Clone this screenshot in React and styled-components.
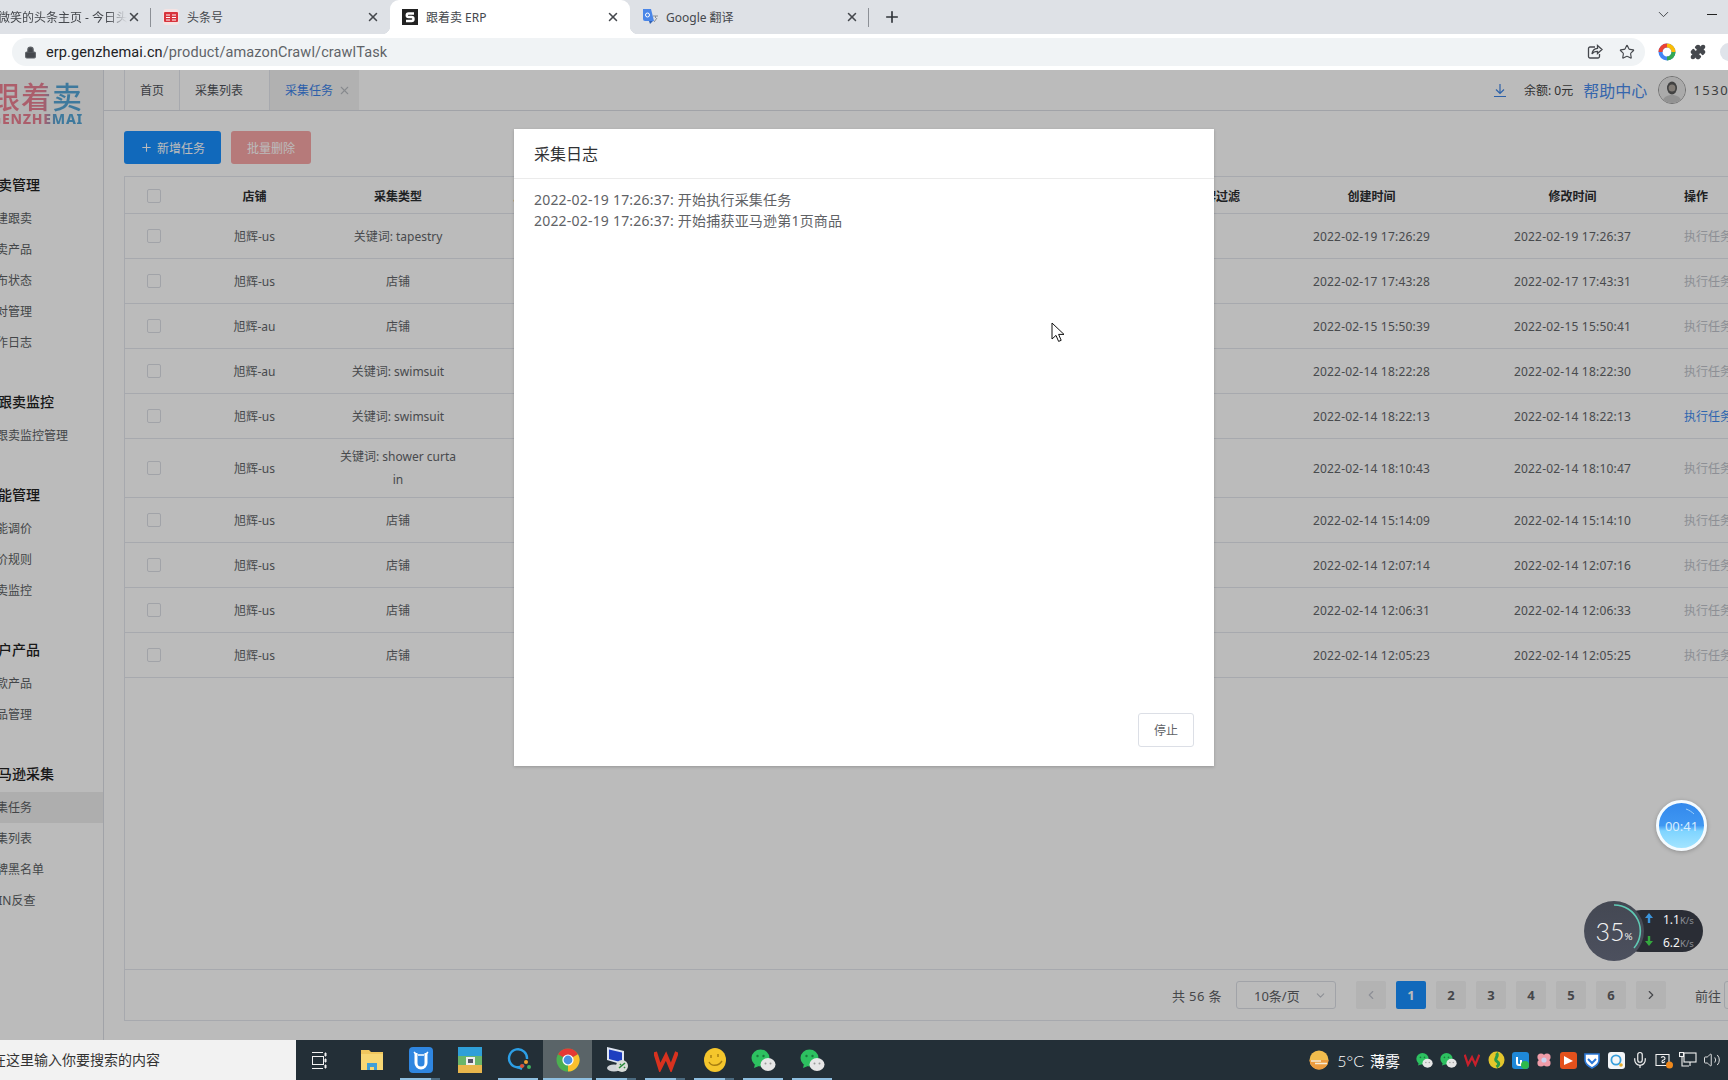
import React from 'react';
import styled, { createGlobalStyle } from 'styled-components';
import { X, Plus, ChevronDown, ChevronLeft, ChevronRight, Lock, Star, Puzzle, Mic, Volume2 } from 'lucide-react';

const SANS = `"Noto Sans", "Noto Sans CJK SC", sans-serif`;

const GlobalStyle = createGlobalStyle`
  html, body {
    margin: 0;
    padding: 0;
    width: 1728px;
    height: 1080px;
    overflow: hidden;
    font-family: ${SANS};
  }
  * { box-sizing: border-box; }
`;

const Screen = styled.div`
  position: relative;
  display: flex;
  flex-direction: column;
  width: 1728px;
  height: 1080px;
  overflow: hidden;
  background: #fff;
`;

/* browser chrome */
const TabStrip = styled.div`
  display: flex;
  align-items: stretch;
  height: 34px;
  flex: none;
  background: #dee1e6;
`;

const BrowserTab = styled.div`
  position: relative;
  display: flex;
  align-items: center;
  flex: none;
  width: ${(p) => p.$width}px;
  margin-left: ${(p) => p.$shift || 0}px;
  padding: ${(p) => (p.$noIcon ? '0 10px 0 0' : '0 10px 0 12px')};
  font-size: 12px;
  color: #45484d;
  background: ${(p) => (p.$active ? '#fff' : 'transparent')};
  border-radius: ${(p) => (p.$active ? '9px 9px 0 0' : '0')};
  ${(p) =>
    p.$divider &&
    `&::after {
      content: "";
      position: absolute;
      right: 0;
      top: 8px;
      height: 19px;
      width: 1px;
      background: #8c9096;
    }`}
  ${(p) =>
    p.$active &&
    `&::before, &::after {
      content: "";
      position: absolute;
      bottom: 0;
      width: 8px;
      height: 8px;
    }
    &::before {
      left: -8px;
      background: radial-gradient(circle at 0 0, transparent 8px, #fff 8.5px);
    }
    &::after {
      right: -8px;
      background: radial-gradient(circle at 100% 0, transparent 8px, #fff 8.5px);
    }`}
`;

const TabIcon = styled.span`
  display: inline-flex;
  flex: none;
  width: 16px;
  height: 16px;
  margin-right: 8px;
`;

const TabTitle = styled.span`
  flex: 1;
  min-width: 0;
  white-space: nowrap;
  overflow: hidden;
  ${(p) =>
    p.$fade &&
    `-webkit-mask-image: linear-gradient(90deg, #000 85%, transparent 100%);
     mask-image: linear-gradient(90deg, #000 85%, transparent 100%);`}
`;

const NewTab = styled.span`
  display: inline-flex;
  align-items: center;
  margin-left: 14px;
  color: #30343a;
`;

const WindowControls = styled.div`
  display: flex;
  align-items: center;
  margin-left: auto;
  gap: 35px;
  padding-right: 11px;
  color: #3a3d42;
  height: 28px;
`;

const MinimizeBar = styled.span`
  display: block;
  width: 10px;
  height: 1px;
  background: #222;
`;

const Toolbar = styled.div`
  display: flex;
  align-items: flex-start;
  height: 36px;
  flex: none;
  padding: 4px 0 0 12px;
  background: #fff;
`;

const Omnibox = styled.div`
  display: flex;
  align-items: center;
  flex: none;
  width: 1633px;
  height: 28px;
  padding: 0 10px 0 12px;
  border-radius: 14px;
  background: #f0f3f5;
  font-family: Roboto, ${SANS};
  font-size: 14.5px;
  color: #5f6368;
`;

const Url = styled.span`
  margin-left: 9px;
  letter-spacing: 0.12px;
  & b {
    font-weight: 400;
    color: #202124;
  }
`;

const OmniActions = styled.div`
  display: flex;
  align-items: center;
  gap: 16px;
  margin-left: auto;
  color: #45484d;
`;

const ExtIcons = styled.div`
  display: flex;
  align-items: center;
  flex: none;
  gap: 14px;
  height: 28px;
  margin-left: 13px;
  color: #45484d;
`;

const ProfileDot = styled.span`
  display: block;
  flex: none;
  width: 18px;
  height: 18px;
  border-radius: 50%;
  background: #dfe3ea;
`;

/* page */
const Page = styled.div`
  position: relative;
  display: flex;
  flex: 1;
  min-height: 0;
  overflow: hidden;
  background: #fff;
`;

const Sidebar = styled.aside`
  flex: none;
  width: 104px;
  border-right: 1px solid #dcdfe6;
  overflow: hidden;
`;

const Logo = styled.div`
  height: 70px;
  padding: 8px 0 0 0;
  background: #f6f6f6;
  white-space: nowrap;
`;

const LogoMark = styled.div`
  margin-left: -10px;
  width: 93px;
  font-size: 30px;
  font-weight: 500;
  line-height: 34px;
  letter-spacing: 1px;
  font-family: "Noto Sans CJK SC", sans-serif;
  background: linear-gradient(90deg, #f07f8f 0%, #e78195 58%, #55a6d6 70%);
  -webkit-background-clip: text;
  background-clip: text;
  color: transparent;
`;

const LogoWord = styled(LogoMark)`
  margin-left: -9px;
  width: 92px;
  font-size: 14px;
  font-weight: 800;
  line-height: 13px;
  letter-spacing: 0.75px;
  font-family: ${SANS};
`;

const Nav = styled.nav`
  padding-top: 27px;
`;

const NavGroup = styled.div`
  margin-bottom: 26px;
`;

const NavTitle = styled.div`
  height: 36px;
  line-height: 35px;
  margin-left: -16px;
  font-size: 14px;
  font-weight: 500;
  color: #222;
  white-space: nowrap;
`;

const NavItem = styled.div`
  height: 31px;
  line-height: 31px;
  font-size: 12px;
  color: #5c5f63;
  white-space: nowrap;
  background: ${(p) => (p.$active ? '#eeeeee' : 'transparent')};
  & span {
    display: block;
    margin-left: -16px;
  }
`;

const Main = styled.main`
  flex: none;
  width: 1716px;
  display: flex;
  flex-direction: column;
`;

const TabBar = styled.div`
  display: flex;
  align-items: stretch;
  flex: none;
  height: 41px;
  padding-left: 20px;
  border-bottom: 1px solid #dcdfe6;
`;

const PageTab = styled.div`
  display: flex;
  align-items: center;
  flex: none;
  width: ${(p) => p.$width}px;
  padding-left: ${(p) => p.$pad || 15}px;
  font-size: 12px;
  color: ${(p) => (p.$active ? '#3b82e8' : '#50535a')};
  background: ${(p) => (p.$active ? '#f2f2f2' : 'transparent')};
  border-left: 1px solid #e4e7ed;
  &:last-of-type {
    border-right: 1px solid #e4e7ed;
  }
`;

const TabClose = styled.span`
  display: inline-flex;
  margin-left: 5px;
  color: #b9bcc2;
`;

const TopRight = styled.div`
  display: flex;
  align-items: center;
  margin-left: 1134px;
  white-space: nowrap;
`;

const DownloadMark = styled.span`
  display: inline-flex;
  color: #3f86e6;
  margin-right: 17px;
`;

const Balance = styled.span`
  font-size: 12px;
  color: #444;
  margin-right: 10px;
`;

const HelpLink = styled.span`
  font-size: 16px;
  color: #4a8bec;
  margin-right: 11px;
`;

const Avatar = styled.span`
  display: inline-flex;
  width: 28px;
  height: 28px;
  margin-right: 7px;
  border-radius: 50%;
  border: 1px solid #9a9a9a;
  overflow: hidden;
  background: #eee;
`;

const UserName = styled.span`
  font-size: 13px;
  letter-spacing: 1.6px;
  color: #555;
`;

const Content = styled.div`
  flex: 1;
  min-height: 0;
  display: flex;
  flex-direction: column;
  padding: 20px 20px 19px;
`;

const Actions = styled.div`
  display: flex;
  gap: 10px;
  flex: none;
  margin-bottom: 12px;
`;

const ActionButton = styled.button`
  display: inline-flex;
  align-items: center;
  justify-content: center;
  width: ${(p) => p.$width}px;
  height: 33px;
  padding: 0;
  border: none;
  border-radius: 3px;
  font-family: inherit;
  font-size: 12px;
  color: #fff;
  background: ${(p) => p.$bg};
  & svg {
    margin-right: 4px;
  }
`;

const Panel = styled.section`
  flex: 1;
  min-height: 0;
  width: 1676px;
  display: flex;
  flex-direction: column;
  border: 1px solid #e4e7ed;
`;

const TableArea = styled.div`
  flex: 1;
  min-height: 0;
`;

const Table = styled.table`
  width: 1674px;
  table-layout: fixed;
  border-collapse: separate;
  border-spacing: 0;
  font-size: 12px;
  color: #63666a;
`;

const Th = styled.th`
  height: 37px;
  padding: 2px 0 0;
  font-weight: 600;
  color: #2b2d30;
  text-align: ${(p) => p.$align || 'center'};
  padding-left: ${(p) => p.$pad || 0}px;
  border-bottom: 1px solid #e4e7ed;
  white-space: nowrap;
`;

const Td = styled.td`
  height: 45px;
  padding: 6px 12px;
  line-height: 23px;
  text-align: center;
  border-bottom: 1px solid #e4e7ed;
  word-break: break-all;
`;

const TimeCell = styled(Td)`
  padding: 6px 0;
  letter-spacing: 0.2px;
`;

const OpCell = styled(Td)`
  text-align: left;
  padding-left: 11px;
  white-space: nowrap;
  word-break: normal;
  color: ${(p) => (p.$enabled ? '#3f8cf0' : '#c0c4cc')};
`;

const CheckBox = styled.span`
  display: inline-block;
  vertical-align: middle;
  width: 14px;
  height: 14px;
  margin-bottom: 2px;
  border: 1px solid #dcdfe6;
  border-radius: 2px;
  background: #fff;
`;

const Pagination = styled.div`
  display: flex;
  align-items: center;
  flex: none;
  justify-content: flex-end;
  height: 51px;
  padding-right: 10px;
  border-top: 1px solid #e4e7ed;
  font-size: 13px;
  color: #606266;
  white-space: nowrap;
`;

const Total = styled.span`
  margin-right: 14px;
  letter-spacing: 0.4px;
`;

const SizeSelect = styled.div`
  display: flex;
  align-items: center;
  justify-content: space-between;
  width: 100px;
  height: 28px;
  margin-right: 15px;
  padding: 0 8px 0 17px;
  border: 1px solid #dcdfe6;
  border-radius: 3px;
  color: #606266;
  & svg {
    color: #c0c4cc;
  }
`;

const PageButton = styled.span`
  display: inline-flex;
  align-items: center;
  justify-content: center;
  width: 30px;
  height: 28px;
  margin: 0 5px;
  border-radius: 2px;
  font-weight: 700;
  color: ${(p) => (p.$active ? '#fff' : p.$disabled ? '#c0c4cc' : '#606266')};
  background: ${(p) => (p.$active ? '#1890ff' : '#f4f4f5')};
`;

const GoTo = styled.span`
  display: inline-flex;
  align-items: center;
  margin-left: 24px;
`;

const GoInput = styled.span`
  display: inline-block;
  width: 46px;
  height: 28px;
  margin: 0 6px 0 3px;
  border: 1px solid #dcdfe6;
  border-radius: 3px;
`;

/* dialog */
const Mask = styled.div`
  position: absolute;
  inset: 0;
  background: rgba(0, 0, 0, 0.265);
`;

const Dialog = styled.div`
  position: absolute;
  left: 514px;
  top: 59px;
  width: 700px;
  height: 637px;
  display: flex;
  flex-direction: column;
  background: #fff;
  box-shadow: 0 1px 3px rgba(0, 0, 0, 0.2);
`;

const DialogHeader = styled.div`
  flex: none;
  height: 50px;
  padding-left: 20px;
  line-height: 50px;
  font-size: 16px;
  color: #303133;
  border-bottom: 1px solid #ebebeb;
`;

const DialogBody = styled.div`
  flex: 1;
  padding: 10px 20px;
  font-size: 14px;
  line-height: 21px;
  letter-spacing: 0.2px;
  color: #606266;
`;

const DialogFooter = styled.div`
  display: flex;
  justify-content: flex-end;
  flex: none;
  padding: 0 20px 19px;
`;

const StopButton = styled.button`
  width: 56px;
  height: 34px;
  padding: 0;
  border: 1px solid #dcdfe6;
  border-radius: 3px;
  background: #fff;
  font-family: inherit;
  font-size: 12px;
  color: #606266;
`;

/* floating desktop widgets */
const TimerBubble = styled.div`
  position: absolute;
  left: 1656px;
  top: 800px;
  width: 51px;
  height: 51px;
  display: flex;
  align-items: center;
  justify-content: center;
  border-radius: 50%;
  border: 3px solid #f4fbff;
  background: linear-gradient(180deg, #3389ec 0%, #3f97f2 50%, #7fd4ff 62%, #a2e4ff 100%);
  box-shadow: 0 1px 4px rgba(0, 0, 0, 0.25);
  color: #d8eeff;
  font-size: 13px;
  & svg {
    position: absolute;
    inset: 0;
  }
`;

const SpeedPill = styled.div`
  position: absolute;
  left: 1620px;
  top: 910px;
  width: 83px;
  height: 42px;
  display: flex;
  flex-direction: column;
  justify-content: center;
  gap: 5px;
  padding-left: 43px;
  border-radius: 21px;
  background: #2a2d35;
  color: #f4f4f4;
  font-size: 12px;
  line-height: 17px;
`;

const SpeedRow = styled.div`
  position: relative;
  white-space: nowrap;
  & small {
    font-size: 9.5px;
    color: #8a8d95;
  }
`;

const SpeedArrow = styled.span`
  position: absolute;
  left: -18px;
  top: 2px;
  display: inline-flex;
`;

const GaugeDial = styled.div`
  position: absolute;
  left: 1584px;
  top: 901px;
  width: 60px;
  height: 60px;
  display: flex;
  align-items: center;
  justify-content: center;
  border-radius: 50%;
  background: linear-gradient(180deg, #444853, #4c505e);
  color: #f2f2f2;
  font-family: Lato, ${SANS};
  font-weight: 300;
  font-size: 25px;
  & svg {
    position: absolute;
    inset: 0;
  }
  & small {
    margin-top: 9px;
    font-size: 10px;
    font-weight: 400;
  }
`;

const Cursor = styled.svg`
  position: absolute;
  left: 1051px;
  top: 322px;
`;

/* taskbar */
const Taskbar = styled.footer`
  position: relative;
  display: flex;
  align-items: stretch;
  flex: none;
  height: 40px;
  background: #232f37;
`;

const SearchBox = styled.div`
  flex: none;
  width: 296px;
  overflow: hidden;
  line-height: 40px;
  font-size: 14px;
  color: #333;
  white-space: nowrap;
  background: #f2f2f2;
  & span {
    margin-left: -8px;
    display: block;
  }
`;

const TaskIcon = styled.div`
  position: relative;
  display: flex;
  align-items: center;
  justify-content: center;
  flex: none;
  width: 49px;
  margin-left: ${(p) => p.$gap || 0}px;
  background: ${(p) => (p.$active ? '#5a6468' : 'transparent')};
  ${(p) =>
    p.$running &&
    `&::after {
      content: "";
      position: absolute;
      left: ${p.$active ? 0 : 4}px;
      right: ${p.$active ? 0 : 5}px;
      bottom: 0;
      height: 2px;
      background: ${p.$stacked ? 'linear-gradient(90deg, #8fbfe0 78%, #4c6b80 78%)' : '#8fbfe0'};
    }`}
`;

const Tray = styled.div`
  display: flex;
  align-items: center;
  margin-left: auto;
  padding-right: 4px;
  color: #fff;
`;

const Weather = styled.span`
  display: inline-flex;
  align-items: center;
  margin-right: 12px;
  font-size: 15px;
  white-space: nowrap;
  & b {
    font-family: Lato, ${SANS};
    font-weight: 300;
    font-size: 16px;
    margin: 0 6px 0 8px;
  }
`;

const TrayItem = styled.span`
  display: inline-flex;
  align-items: center;
  justify-content: center;
  width: 24px;
  height: 24px;
`;

/* drawn icons */
const ToutiaoFavicon = () => (
  <svg width="16" height="16" viewBox="0 0 16 16">
    <rect width="16" height="16" rx="3" fill="#f5e3e3" />
    <rect x="1" y="3" width="14" height="10" rx="1" fill="#d8343c" />
    <path d="M3 6h4M3 8.5h4M3 11h4M9 6h4M9 8.5h4M9 11h4" stroke="#fff" strokeWidth="1" />
  </svg>
);

const SFavicon = () => (
  <svg width="16" height="16" viewBox="0 0 16 16">
    <rect width="16" height="16" fill="#222" />
    <path d="M12 4.5H6.5a1.6 1.6 0 0 0 0 3.5h3a1.8 1.8 0 0 1 0 4H4" fill="none" stroke="#fff" strokeWidth="2.4" />
  </svg>
);

const TranslateFavicon = () => (
  <svg width="16" height="16" viewBox="0 0 16 16">
    <path d="M1 0h8l3 12H3a2 2 0 0 1-2-2z" fill="#4a86e8" />
    <circle cx="5.5" cy="6" r="2" fill="none" stroke="#fff" strokeWidth="1" />
    <path d="M11 7h5M13.5 7v2M12 13l3-4" stroke="#8a8f96" strokeWidth="1" />
    <path d="M7 12l1 3 3-3z" fill="#2f5fb3" />
  </svg>
);

const ShareIcon = () => (
  <svg width="16" height="16" viewBox="0 0 16 16" fill="none" stroke="currentColor" strokeWidth="1.3">
    <path d="M8 3H3a1.5 1.5 0 0 0-1.5 1.5v8A1.5 1.5 0 0 0 3 14h8a1.5 1.5 0 0 0 1.5-1.5V10" />
    <path d="M10.5 1.5L15 5.5 10.5 9.5V7.3C8 7.3 6.2 8 5 10c.3-3 2.2-5.3 5.5-5.6z" />
  </svg>
);

const RingExtension = () => (
  <svg width="18" height="18" viewBox="0 0 18 18" fill="none" strokeWidth="4">
    <circle cx="9" cy="9" r="6.5" stroke="#4285f4" />
    <path d="M2.5 9A6.5 6.5 0 0 1 9 2.5" stroke="#ea4335" />
    <path d="M9 2.5A6.5 6.5 0 0 1 15.5 9" stroke="#fbbc05" />
    <path d="M15.5 9A6.5 6.5 0 0 1 9 15.5" stroke="#34a853" />
  </svg>
);

const DownloadIcon = () => (
  <svg width="14" height="16" viewBox="0 0 14 16" fill="none" stroke="currentColor" strokeWidth="1.2">
    <path d="M7 2v9M3 7.5L7 11.5 11 7.5M1 14.5h12" />
  </svg>
);

const PortraitIcon = () => (
  <svg width="26" height="26" viewBox="0 0 26 26">
    <rect width="26" height="26" fill="#e8e8e8" />
    <path d="M3 26c1-6 5-8 10-8s9 2 10 8z" fill="#c8c8c8" />
    <ellipse cx="13" cy="11" rx="5" ry="6.5" fill="#5a5a5a" />
    <ellipse cx="13" cy="11" rx="3.4" ry="3.6" fill="#b0a8a0" />
  </svg>
);

const FolderIcon = () => (
  <svg width="24" height="24" viewBox="0 0 24 24">
    <path d="M1 2h8l2 2h12v18H1z" fill="#f0c75e" />
    <rect x="1" y="6" width="22" height="16" fill="#f7d774" />
    <path d="M7 22v-7h10v7h-3v-3h-4v3z" fill="#3f9fd8" />
  </svg>
);

const UBlueIcon = () => (
  <svg width="24" height="26" viewBox="0 0 24 26">
    <rect width="24" height="26" rx="4" fill="#2f86e0" />
    <path d="M7 6v10a5 5 0 0 0 10 0V6" fill="none" stroke="#fff" strokeWidth="3" />
    <path d="M5 5l3 3M19 5l-3 3M9 8h6" stroke="#fff" strokeWidth="1.6" />
  </svg>
);

const WinrarIcon = () => (
  <svg width="24" height="26" viewBox="0 0 24 26">
    <rect y="0" width="24" height="9" fill="#2f9fd8" />
    <rect y="9" width="24" height="9" fill="#6ab56a" />
    <rect y="18" width="24" height="8" fill="#e8b64c" />
    <rect x="8" y="10" width="9" height="8" fill="#eee" />
    <rect x="10" y="12" width="5" height="4" fill="#556" />
  </svg>
);

const QBubbleIcon = () => (
  <svg width="26" height="26" viewBox="0 0 26 26" fill="none">
    <path d="M18 18a9 9 0 1 1 3-6" stroke="#2c9fe6" strokeWidth="2.4" />
    <path d="M11 20l5 2" stroke="#2c9fe6" strokeWidth="2.4" />
    <circle cx="20" cy="15" r="2" fill="#f0a030" />
    <circle cx="16" cy="19" r="2" fill="#e05030" />
    <circle cx="23" cy="20" r="2" fill="#40b060" />
  </svg>
);

const ChromeIcon = () => (
  <svg width="24" height="24" viewBox="0 0 24 24" fill="none">
    <circle cx="12" cy="12" r="8" stroke="#4caf50" strokeWidth="7" />
    <path d="M5.07 8A8 8 0 0 1 18.93 8" stroke="#e53935" strokeWidth="7" />
    <path d="M18.93 8A8 8 0 0 1 12 20" stroke="#fbc02d" strokeWidth="7" />
    <circle cx="12" cy="12" r="5.6" fill="#fff" />
    <circle cx="12" cy="12" r="4.4" fill="#4a90e2" />
  </svg>
);

const ComputerIcon = () => (
  <svg width="26" height="28" viewBox="0 0 26 28">
    <path d="M3 1l17 4v14L3 14z" fill="#dfe6f2" />
    <path d="M5 3.5l13 3v10l-13-3.5z" fill="#1e3fc0" />
    <ellipse cx="10" cy="22" rx="7" ry="3.5" fill="#cfd3d8" />
    <circle cx="18" cy="20" r="6" fill="#d8dcd8" />
    <path d="M15 22l6-5M16 18l1 1M20 21l1 1" stroke="#2a8a3a" strokeWidth="1.6" />
  </svg>
);

const WpsIcon = ({ size = 24 }) => (
  <svg width={size} height={size} viewBox="0 0 24 24" fill="none">
    <path d="M1 4l5 16 6-12 5 12 6-16" stroke="#d8321f" strokeWidth="4" />
  </svg>
);

const SmileIcon = () => (
  <svg width="24" height="26" viewBox="0 0 24 26" fill="none">
    <ellipse cx="12" cy="13" rx="11" ry="12" fill="#f5c62c" />
    <path d="M6 15c2 4 9 5 13-1" stroke="#a57c10" strokeWidth="1.4" />
    <path d="M8 8v3M15 7v3" stroke="#a57c10" strokeWidth="1.4" />
  </svg>
);

const WechatIcon = ({ size = 25 }) => (
  <svg width={size} height={size} viewBox="0 0 25 25">
    <ellipse cx="9.5" cy="10" rx="9" ry="8.5" fill="#2dc160" />
    <path d="M4 16l-1 4 5-2z" fill="#2dc160" />
    <circle cx="6.5" cy="8" r="1.2" fill="#1a7a3c" />
    <circle cx="12.5" cy="8" r="1.2" fill="#1a7a3c" />
    <ellipse cx="17" cy="16.5" rx="7.5" ry="6.5" fill="#e6e6e6" />
    <circle cx="14.5" cy="15.5" r="1" fill="#9a9a9a" />
    <circle cx="19.5" cy="15.5" r="1" fill="#9a9a9a" />
  </svg>
);

const TaskViewIcon = () => (
  <svg width="17" height="17" viewBox="0 0 17 17" fill="none" stroke="#f2f2f2" strokeWidth="1">
    <path d="M0 .5h11M0 16.5h11" />
    <rect x=".5" y="4.5" width="11" height="8" />
    <path d="M13 1h1v3h-1zM13 7h1v3h-1zM13 13h1v3h-1z" fill="#f2f2f2" />
  </svg>
);

const WeatherIcon = () => (
  <svg width="20" height="20" viewBox="0 0 20 20">
    <circle cx="10" cy="10" r="9.5" fill="#f1bd4d" />
    <path d="M.5 10a9.5 9.5 0 0 0 19 0z" fill="#ec9c3f" />
    <path d="M2 11h10M6 13.5h12" stroke="#f5ead4" strokeWidth="1.6" />
  </svg>
);

const TrayBadge = ({ bg, children, radius = 3 }) => (
  <svg width="17" height="17" viewBox="0 0 17 17">
    <rect width="17" height="17" rx={radius} fill={bg} />
    {children}
  </svg>
);

const trayIcons = [
  <WechatIcon size={17} />,
  <WechatIcon size={17} />,
  <svg width="16" height="14" viewBox="0 0 24 20" fill="none"><path d="M1 2l5 15 6-11 5 11 6-15" stroke="#c8202c" strokeWidth="3.4" /></svg>,
  <svg width="17" height="18" viewBox="0 0 17 18"><ellipse cx="8.5" cy="9" rx="8" ry="8.5" fill="#e4c62c" /><path d="M8.5 2c3 3-3 6 0 8s3 4 0 6" stroke="#2a9a4a" strokeWidth="3" fill="none" /></svg>,
  <TrayBadge bg="#1e88d8"><path d="M5 5v6a2 2 0 0 0 2 2h2V8" stroke="#fff" strokeWidth="2" fill="none" /><circle cx="13" cy="13" r="4" fill="#2fb84c" /></TrayBadge>,
  <svg width="16" height="16" viewBox="0 0 16 16"><circle cx="5" cy="5" r="3.6" fill="#ef9ca8" /><circle cx="11" cy="5" r="3.6" fill="#ef9ca8" /><circle cx="5" cy="11" r="3.6" fill="#ef9ca8" /><circle cx="11" cy="11" r="3.6" fill="#ef9ca8" /><circle cx="8" cy="8" r="2.6" fill="#c9d3ef" /></svg>,
  <TrayBadge bg="#e4511c"><path d="M4 4l9 5-9 4z" fill="#fff" /></TrayBadge>,
  <svg width="16" height="17" viewBox="0 0 16 17" fill="none"><path d="M1 2h14v6c0 4-3 6-7 8-4-2-7-4-7-8z" fill="#fff" stroke="#2a78d8" strokeWidth="1.6" /><path d="M4 7l4 4 4-4" stroke="#2a78d8" strokeWidth="2" /></svg>,
  <TrayBadge bg="#f4f6f8"><circle cx="8" cy="8" r="4.6" stroke="#3aa0dc" strokeWidth="1.8" fill="none" /><circle cx="13" cy="13" r="1.8" fill="#e8b030" /></TrayBadge>,
  <Mic size={18} color="#f2f2f2" strokeWidth={1.6} />,
  <svg width="18" height="18" viewBox="0 0 18 18" fill="none" stroke="#f2f2f2" strokeWidth="1.1"><path d="M1 3.5h13v11H1z" /><path d="M6 6.5c2-1.5 4-1 4 1s-3 1-3 3 2 1 3 0" /><circle cx="14.5" cy="14" r="3.5" fill="#f0891c" stroke="none" /></svg>,
  <svg width="18" height="16" viewBox="0 0 18 16" fill="none" stroke="#f2f2f2" strokeWidth="1.1"><rect x="5" y="1" width="12" height="9" /><rect x=".5" y=".5" width="4" height="4" fill="#232f37" /><path d="M3 5v9h7M11 10v4" /></svg>,
  <Volume2 size={18} color="#f2f2f2" strokeWidth={1.2} />,
];

const navGroups = [
  { title: '跟卖管理', items: ['创建跟卖', '跟卖产品', '发布状态', '应对管理', '操作日志'] },
  { title: '防跟卖监控', items: ['防跟卖监控管理'] },
  { title: '智能管理', items: ['智能调价', '调价规则', '跟卖监控'] },
  { title: '客户产品', items: ['爆款产品', '产品管理'] },
  { title: '亚马逊采集', items: ['采集任务', '采集列表', '品牌黑名单', 'ASIN反查'] },
];

const rows = [
  { shop: '旭辉-us', type: '关键词: tapestry', created: '2022-02-19 17:26:29', updated: '2022-02-19 17:26:37' },
  { shop: '旭辉-us', type: '店铺', created: '2022-02-17 17:43:28', updated: '2022-02-17 17:43:31' },
  { shop: '旭辉-au', type: '店铺', created: '2022-02-15 15:50:39', updated: '2022-02-15 15:50:41' },
  { shop: '旭辉-au', type: '关键词: swimsuit', created: '2022-02-14 18:22:28', updated: '2022-02-14 18:22:30' },
  { shop: '旭辉-us', type: '关键词: swimsuit', created: '2022-02-14 18:22:13', updated: '2022-02-14 18:22:13', enabled: true },
  { shop: '旭辉-us', type: '关键词: shower curtain', created: '2022-02-14 18:10:43', updated: '2022-02-14 18:10:47' },
  { shop: '旭辉-us', type: '店铺', created: '2022-02-14 15:14:09', updated: '2022-02-14 15:14:10' },
  { shop: '旭辉-us', type: '店铺', created: '2022-02-14 12:07:14', updated: '2022-02-14 12:07:16' },
  { shop: '旭辉-us', type: '店铺', created: '2022-02-14 12:06:31', updated: '2022-02-14 12:06:33' },
  { shop: '旭辉-us', type: '店铺', created: '2022-02-14 12:05:23', updated: '2022-02-14 12:05:25' },
];

const columnWidths = [57, 145, 142, 113, 579, 110, 201, 201, 126];

export default function App() {
  return (
    <Screen>
      <GlobalStyle />

      <TabStrip>
        <BrowserTab $width={153} $shift={-2} $noIcon $divider>
          <TabTitle $fade>微笑的头条主页 - 今日头条</TabTitle>
          <X size={14} strokeWidth={2.6} />
        </BrowserTab>
        <BrowserTab $width={239}>
          <TabIcon><ToutiaoFavicon /></TabIcon>
          <TabTitle>头条号</TabTitle>
          <X size={14} strokeWidth={2.6} />
        </BrowserTab>
        <BrowserTab $width={240} $active>
          <TabIcon><SFavicon /></TabIcon>
          <TabTitle>跟着卖 ERP</TabTitle>
          <X size={14} strokeWidth={2.6} />
        </BrowserTab>
        <BrowserTab $width={239} $divider>
          <TabIcon><TranslateFavicon /></TabIcon>
          <TabTitle>Google 翻译</TabTitle>
          <X size={14} strokeWidth={2.6} />
        </BrowserTab>
        <NewTab><Plus size={18} strokeWidth={2.2} /></NewTab>
        <WindowControls>
          <ChevronDown size={17} strokeWidth={1.3} />
          <MinimizeBar />
        </WindowControls>
      </TabStrip>

      <Toolbar>
        <Omnibox>
          <Lock size={13} fill="#45484d" strokeWidth={2} />
          <Url><b>erp.genzhemai.cn</b>/product/amazonCrawl/crawlTask</Url>
          <OmniActions>
            <ShareIcon />
            <Star size={16} strokeWidth={1.7} />
          </OmniActions>
        </Omnibox>
        <ExtIcons>
          <RingExtension />
          <Puzzle size={16} fill="currentColor" />
          <ProfileDot />
        </ExtIcons>
      </Toolbar>

      <Page>
        <Sidebar>
          <Logo>
            <LogoMark>跟着卖</LogoMark>
            <LogoWord>GENZHEMAI</LogoWord>
          </Logo>
          <Nav>
            {navGroups.map((group) => (
              <NavGroup key={group.title}>
                <NavTitle>{group.title}</NavTitle>
                {group.items.map((item) => (
                  <NavItem key={item} $active={item === '采集任务'}><span>{item}</span></NavItem>
                ))}
              </NavGroup>
            ))}
          </Nav>
        </Sidebar>

        <Main>
          <TabBar>
            <PageTab $width={55}>首页</PageTab>
            <PageTab $width={90}>采集列表</PageTab>
            <PageTab $width={90} $active>采集任务<TabClose><X size={13} /></TabClose></PageTab>
            <TopRight>
              <DownloadMark><DownloadIcon /></DownloadMark>
              <Balance>余额: 0元</Balance>
              <HelpLink>帮助中心</HelpLink>
              <Avatar><PortraitIcon /></Avatar>
              <UserName>15303</UserName>
            </TopRight>
          </TabBar>

          <Content>
            <Actions>
              <ActionButton $width={97} $bg="#1890ff"><Plus size={13} />新增任务</ActionButton>
              <ActionButton $width={80} $bg="#f9a7a7">批量删除</ActionButton>
            </Actions>

            <Panel>
              <TableArea>
                <Table>
                  <colgroup>
                    {columnWidths.map((w, i) => <col key={i} width={w} />)}
                  </colgroup>
                  <thead>
                    <tr>
                      <Th><CheckBox /></Th>
                      <Th>店铺</Th>
                      <Th>采集类型</Th>
                      <Th>周期</Th>
                      <Th />
                      <Th>品牌过滤</Th>
                      <Th>创建时间</Th>
                      <Th>修改时间</Th>
                      <Th $align="left" $pad={11}>操作</Th>
                    </tr>
                  </thead>
                  <tbody>
                    {rows.map((row) => (
                      <tr key={row.created}>
                        <Td><CheckBox /></Td>
                        <Td>{row.shop}</Td>
                        <Td>{row.type}</Td>
                        <Td colSpan={3} />
                        <TimeCell>{row.created}</TimeCell>
                        <TimeCell>{row.updated}</TimeCell>
                        <OpCell $enabled={row.enabled}>执行任务</OpCell>
                      </tr>
                    ))}
                  </tbody>
                </Table>
              </TableArea>

              <Pagination>
                <Total>共 56 条</Total>
                <SizeSelect>10条/页<ChevronDown size={13} /></SizeSelect>
                <PageButton $disabled><ChevronLeft size={14} /></PageButton>
                <PageButton $active>1</PageButton>
                <PageButton>2</PageButton>
                <PageButton>3</PageButton>
                <PageButton>4</PageButton>
                <PageButton>5</PageButton>
                <PageButton>6</PageButton>
                <PageButton><ChevronRight size={14} /></PageButton>
                <GoTo>前往<GoInput />页</GoTo>
              </Pagination>
            </Panel>
          </Content>
        </Main>

        <Mask />

        <Dialog>
          <DialogHeader>采集日志</DialogHeader>
          <DialogBody>
            <div>2022-02-19 17:26:37: 开始执行采集任务</div>
            <div>2022-02-19 17:26:37: 开始捕获亚马逊第1页商品</div>
          </DialogBody>
          <DialogFooter>
            <StopButton>停止</StopButton>
          </DialogFooter>
        </Dialog>
      </Page>

      <Taskbar>
        <SearchBox><span>在这里输入你要搜索的内容</span></SearchBox>
        <TaskIcon><TaskViewIcon /></TaskIcon>
        <TaskIcon $gap={2}><FolderIcon /></TaskIcon>
        <TaskIcon $running $stacked><UBlueIcon /></TaskIcon>
        <TaskIcon><WinrarIcon /></TaskIcon>
        <TaskIcon $running><QBubbleIcon /></TaskIcon>
        <TaskIcon $running $active><ChromeIcon /></TaskIcon>
        <TaskIcon $running $stacked><ComputerIcon /></TaskIcon>
        <TaskIcon $running $stacked><WpsIcon /></TaskIcon>
        <TaskIcon $running $stacked><SmileIcon /></TaskIcon>
        <TaskIcon $running><WechatIcon /></TaskIcon>
        <TaskIcon $running><WechatIcon /></TaskIcon>
        <Tray>
          <Weather>
            <WeatherIcon />
            <b>5°C</b>
            薄雾
          </Weather>
          {trayIcons.map((icon, i) => <TrayItem key={i}>{icon}</TrayItem>)}
        </Tray>
      </Taskbar>

      <TimerBubble>
        <svg width="45" height="45" viewBox="0 0 45 45" fill="none">
          <path d="M27 6c3 1 6 3 8 5" stroke="#9fd0f8" strokeWidth="1" />
        </svg>
        00:41
      </TimerBubble>

      <SpeedPill>
        <SpeedRow>
          <SpeedArrow><svg width="8" height="10" viewBox="0 0 8 10"><path d="M4 0l4 5H5.2v5H2.8V5H0z" fill="#3b94dc" /></svg></SpeedArrow>
          1.1<small>K/s</small>
        </SpeedRow>
        <SpeedRow>
          <SpeedArrow><svg width="8" height="10" viewBox="0 0 8 10"><path d="M4 10L0 5h2.8V0h2.4v5H8z" fill="#35a83f" /></svg></SpeedArrow>
          6.2<small>K/s</small>
        </SpeedRow>
      </SpeedPill>

      <GaugeDial>
        <svg width="60" height="60" viewBox="0 0 60 60" fill="none">
          <path d="M30 4a26 26 0 0 1 20 43" stroke="#5fc9b4" strokeWidth="1.6" />
        </svg>
        35<small>%</small>
      </GaugeDial>

      <Cursor width="14" height="21" viewBox="0 0 14 21">
        <path d="M1 1v16l4-3.6 2.6 6 2.6-1.1-2.6-5.9H13z" fill="#fff" stroke="#111" strokeWidth="1" />
      </Cursor>
    </Screen>
  );
}
